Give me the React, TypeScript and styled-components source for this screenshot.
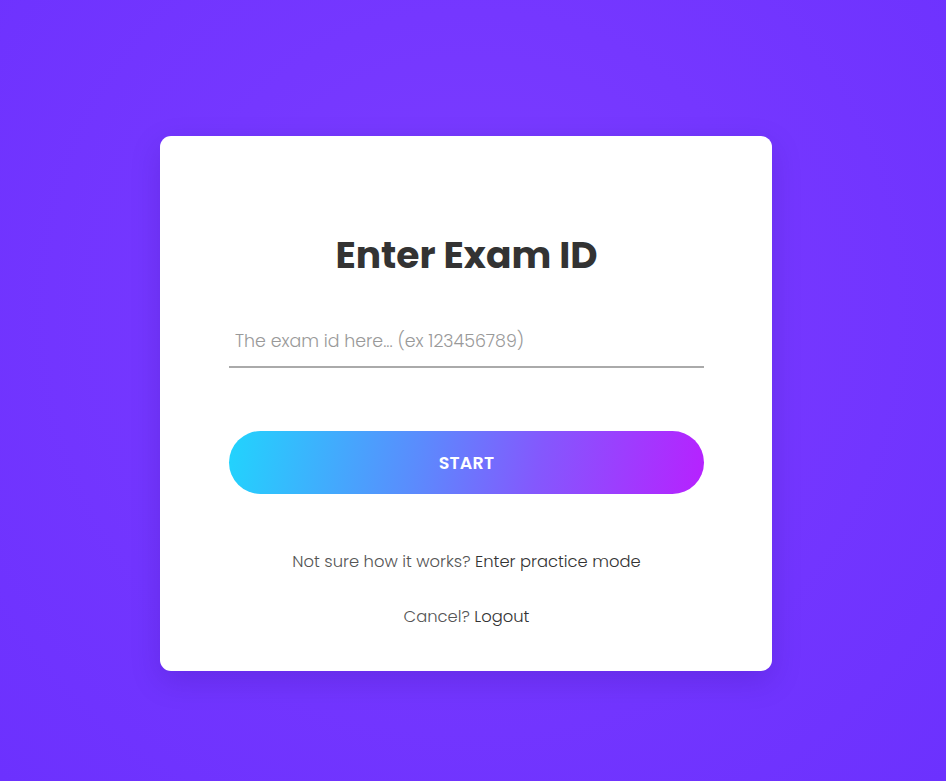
import React from "react";
import styled, { createGlobalStyle } from "styled-components";

const Global = createGlobalStyle`
  html, body { margin: 0; padding: 0; }
  body {
    font-family: "Poppins", "Noto Sans", "Open Sans", sans-serif;
    background: #7035fe;
  }
  * { box-sizing: border-box; }
`;

const Page = styled.div`
  min-height: 100vh;
  display: flex;
  align-items: center;
  justify-content: center;
  padding: 26px 14px 0 0;
  background: radial-gradient(circle at 50% 40%, #7c3dff 0%, #7537ff 45%, #6c31fe 100%);
`;

const Card = styled.div`
  width: 612px;
  height: 535px;
  background: #fff;
  border-radius: 11px;
  box-shadow: 0 10px 30px rgba(40, 0, 120, 0.18);
  padding: 98px 68px 0 69px;
  display: flex;
  flex-direction: column;
  align-items: stretch;
`;

const Title = styled.h1`
  margin: 0;
  text-align: center;
  font-size: 37.6px;
  line-height: 42px;
  font-weight: 700;
  color: #333333;
`;

const Input = styled.input`
  margin-top: 40px;
  height: 52px;
  width: 100%;
  border: none;
  border-bottom: 2px solid #aaaaaa;
  outline: none;
  padding: 0 6px;
  font-family: inherit;
  font-size: 17.4px;
  font-weight: 300;
  color: #333;
  background: transparent;
  &::placeholder { color: #999999; }
`;

const StartButton = styled.button`
  margin-top: 63px;
  height: 63px;
  width: 100%;
  border: none;
  border-radius: 32px;
  background: linear-gradient(100deg, #21d4fd 0%, #5b8bfd 40%, #8458fd 65%, #b721ff 100%);
  color: #fff;
  font-family: inherit;
  font-size: 17.5px;
  font-weight: 600;
  letter-spacing: 0.2px;
  cursor: pointer;
`;

const Line = styled.p<{ $gap: number }>`
  margin: ${(p) => p.$gap}px 0 0;
  text-align: center;
  font-size: 16.35px;
  font-weight: 300;
  line-height: 24px;
  color: #555555;
`;

const Link = styled.a`
  color: #333333;
  text-decoration: none;
  cursor: pointer;
`;

export default function App() {
  return (
    <>
      <Global />
      <Page>
        <Card>
          <Title>Enter Exam ID</Title>
          <Input placeholder="The exam id here... (ex 123456789)" />
          <StartButton>START</StartButton>
          <Line $gap={56}>
            Not sure how it works? <Link>Enter practice mode</Link>
          </Line>
          <Line $gap={31}>
            Cancel? <Link>Logout</Link>
          </Line>
        </Card>
      </Page>
    </>
  );
}
